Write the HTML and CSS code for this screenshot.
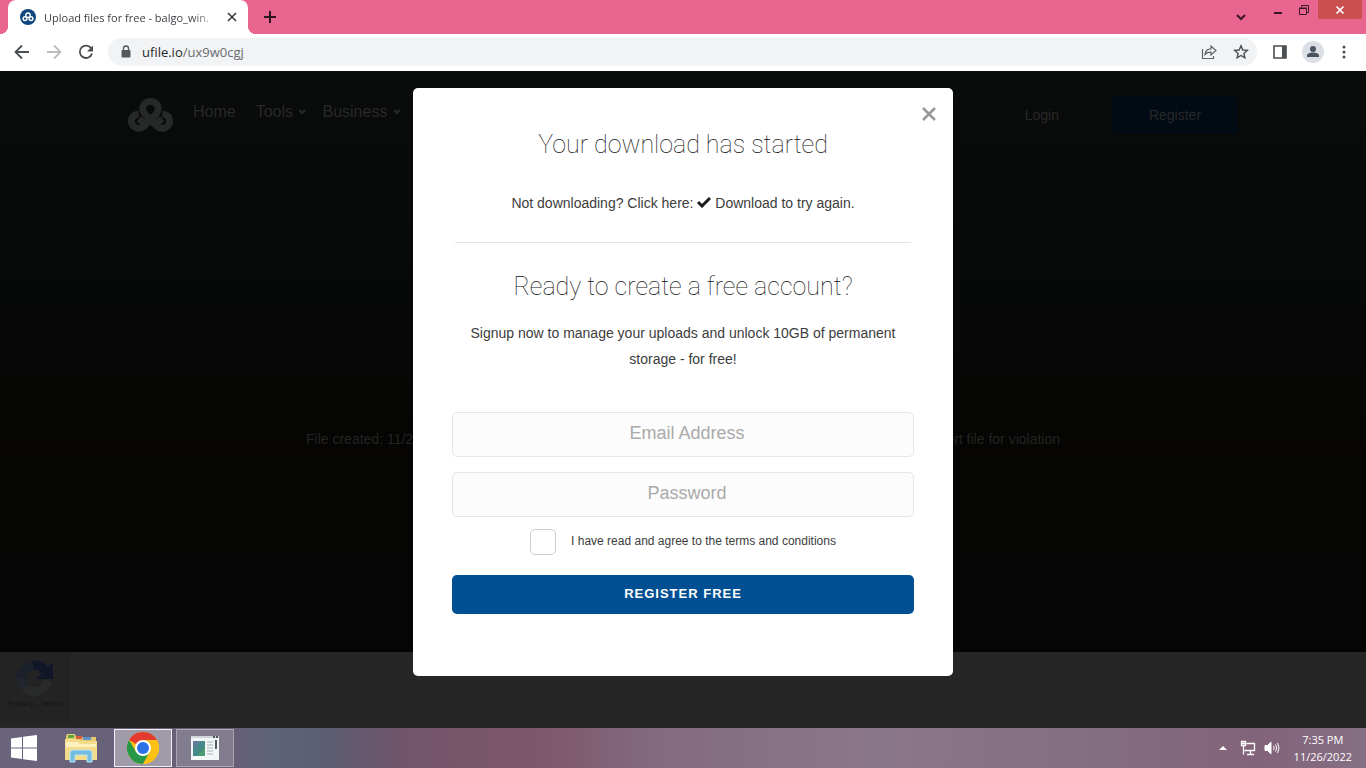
FILE: index.html
```html
<!DOCTYPE html>
<html lang="en">
<head>
    <meta charset="utf-8">
    <title>Upload files for free - balgo_win.</title>
    <link rel="stylesheet" href="styles.css">
</head>
<body>
    <!-- browser tabs -->
    <div class="tabstrip">
        <div class="tab">
            <svg class="favicon" width="16" height="16" viewBox="0 0 16 16">
                <circle cx="8" cy="8" r="8" fill="#11477f"/>
                <g fill="none" stroke="#fff" stroke-width="1.4">
                    <circle cx="8" cy="6.2" r="2.2"/>
                    <circle cx="5" cy="9.6" r="1.9"/>
                    <circle cx="11" cy="9.6" r="1.9"/>
                </g>
            </svg>
            <span class="tab-title">Upload files for free - balgo_win.</span>
            <button class="icon-button" aria-label="Close tab">
                <svg width="10" height="10" viewBox="0 0 10 10" stroke="#333" stroke-width="1.5"><path d="M1 1l8 8M9 1l-8 8"/></svg>
            </button>
        </div>
        <button class="icon-button new-tab" aria-label="New tab">
            <svg width="14" height="14" viewBox="0 0 14 14" stroke="#2c1620" stroke-width="2"><path d="M7 1v12M1 7h12"/></svg>
        </button>
        <div class="window-buttons">
            <button class="icon-button tab-search" aria-label="Search tabs">
                <svg width="12" height="12" viewBox="0 0 12 12" fill="none" stroke="#3c1726" stroke-width="2"><path d="M2 4l4 4 4-4"/></svg>
            </button>
            <button class="icon-button" aria-label="Minimize">
                <svg width="12" height="12" viewBox="0 0 12 12" stroke="#3c1726" stroke-width="2"><path d="M2 9h8"/></svg>
            </button>
            <button class="icon-button" aria-label="Restore">
                <svg width="12" height="12" viewBox="0 0 12 12" fill="none" stroke="#3c1726"><path d="M1.5 4.5h7v6h-7zM1 4h8M3.5 3V1.500h7v7H9"/></svg>
            </button>
            <button class="icon-button window-close" aria-label="Close">
                <svg width="10" height="10" viewBox="0 0 10 10" stroke="#fff" stroke-width="1.700"><path d="M1.500 1.500l7 7M8.500 1.500l-7 7"/></svg>
            </button>
        </div>
    </div>

    <!-- address bar -->
    <div class="toolbar">
        <button class="icon-button" aria-label="Back">
            <svg width="16" height="16" viewBox="0 0 16 16" fill="none" stroke="#4a4d51" stroke-width="1.800"><path d="M15 8H2M8 1.500L1.500 8 8 14.500"/></svg>
        </button>
        <button class="icon-button" aria-label="Forward">
            <svg width="16" height="16" viewBox="0 0 16 16" fill="none" stroke="#bbbdbf" stroke-width="1.800"><path d="M1 8h13M8 1.500L14.500 8 8 14.500"/></svg>
        </button>
        <button class="icon-button" aria-label="Reload">
            <svg width="16" height="16" viewBox="0 0 16 16"><path d="M13.300 4.500A6.200 6.200 0 1 0 14 9.500" fill="none" stroke="#4a4d51" stroke-width="1.800"/><path d="M15 1.500v6H9z" fill="#4a4d51"/></svg>
        </button>
        <div class="address">
            <svg width="10" height="14" viewBox="0 0 10 14"><rect y="5" x=".5" width="9" height="7.500" rx="1" fill="#54575b"/><path d="M2.500 6V3.500a2.500 2.500 0 0 1 5 0V6" fill="none" stroke="#54575b" stroke-width="1.300"/></svg>
            <span class="url">ufile.io<span class="url-path">/ux9w0cgj</span></span>
            <button class="icon-button" aria-label="Share">
                <svg width="16" height="16" viewBox="0 0 16 16" fill="none" stroke="#5f6368" stroke-width="1.200"><path d="M1.500 5v9.500h11V12M4 10.500c.5-4 3-5.700 6-5.700V2l5 4.500L10 11V8.200c-2.500 0-4.300.5-6 2.300z"/></svg>
            </button>
            <button class="icon-button" aria-label="Bookmark">
                <svg width="16" height="16" viewBox="0 0 16 16" fill="none" stroke="#4a4d51" stroke-width="1.400"><path d="M8 1.800l1.800 4.200 4.500.4-3.400 3 1 4.400L8 11.500l-3.900 2.300 1-4.400-3.400-3L6.200 6z"/></svg>
            </button>
        </div>
        <button class="icon-button" aria-label="Side panel">
            <svg width="14" height="14" viewBox="0 0 14 14"><path d="M1 1h12v12H1z" fill="none" stroke="#4a4d51" stroke-width="1.600"/><path d="M9 1h4v12H9z" fill="#4a4d51"/></svg>
        </button>
        <button class="icon-button profile" aria-label="Profile">
            <svg width="22" height="22" viewBox="0 0 22 22"><circle cx="11" cy="11" r="11" fill="#dcdfe6"/><circle cx="11" cy="8" r="3" fill="#4c5360"/><path d="M5 16v-1.500c0-4 12-4 12 0V16z" fill="#4c5360"/></svg>
        </button>
        <button class="icon-button" aria-label="Menu">
            <svg width="4" height="14" viewBox="0 0 4 14" fill="#4a4d51"><circle cx="2" cy="2" r="1.500"/><circle cx="2" cy="7" r="1.500"/><circle cx="2" cy="12" r="1.500"/></svg>
        </button>
    </div>

    <!-- the web page -->
    <div class="page">
        <div class="hero">
            <nav class="nav">
                <a class="logo" href="#" aria-label="Home page">
                    <svg width="45" height="36" viewBox="0 0 46 36" fill="none" stroke="#272828" stroke-width="7" stroke-linejoin="round"><path d="M11 17C2 18 1 28 8 31c5 2 8-1 11-4l10-10c5-8-1-13-6-13s-11 5-6 13l10 10c3 3 6 6 11 4 7-3 6-13-3-14M11 22l5 4M35 22l-5 4"/></svg>
                </a>
                <a href="#">Home</a>
                <a href="#">Tools <svg class="caret" width="8" height="6" viewBox="0 0 8 6"><path d="M1 1l3 3 3-3"/></svg></a>
                <a class="business" href="#">Business <svg class="caret" width="8" height="6" viewBox="0 0 8 6"><path d="M1 1l3 3 3-3"/></svg></a>
                <a class="login" href="#">Login</a>
                <a class="register" href="#">Register</a>
            </nav>
            <div class="file-info">
                <span>File created: 11/26/2022</span>
                <a href="#">Report file for violation</a>
            </div>
        </div>
        <div class="page-bottom">
            <div class="captcha">
                <svg width="40" height="40" viewBox="0 0 40 40" fill="none" stroke-width="9">
                    <path d="M6 20A14 14 0 0 1 20 6" stroke="#1b202b"/>
                    <path d="M18 6a14 14 0 0 1 13 7" stroke="#121629"/>
                    <path d="M38 3v17H21z" fill="#121629"/>
                    <path d="M33 22A14 14 0 0 1 9 28" stroke="#292b2a"/>
                    <path d="M6 19a14 14 0 0 0 4 10" stroke="#20252e"/>
                </svg>
                <span>Privacy - Terms</span>
            </div>
        </div>

        <!-- the download dialog -->
        <div class="overlay">
            <div class="modal" role="dialog" aria-labelledby="modal-title">
                <button class="icon-button modal-close" aria-label="Close dialog">
                    <svg width="16" height="16" viewBox="0 0 16 16" stroke="#999" stroke-width="2.600"><path d="M2 2l12 12M14 2L2 14"/></svg>
                </button>
                <h2 id="modal-title">Your download has started</h2>
                <p class="retry">Not downloading? Click here:
                    <a href="#"><svg width="14" height="11" viewBox="0 0 14 11" fill="none" stroke="#1c1c1c" stroke-width="3"><path d="M1 5l4 4 8-8"/></svg> Download</a> to try again.</p>
                <hr>
                <h2>Ready to create a free account?</h2>
                <p class="signup">Signup now to manage your uploads and unlock 10GB of permanent storage - for free!</p>
                <form>
                    <input class="field" type="email" placeholder="Email Address" aria-label="Email Address">
                    <input class="field" type="password" placeholder="Password" aria-label="Password">
                    <div class="terms">
                        <input type="checkbox" id="agree">
                        <label for="agree">I have read and agree to the terms and conditions</label>
                    </div>
                    <button class="submit" type="button">REGISTER FREE</button>
                </form>
            </div>
        </div>
    </div>

    <!-- taskbar -->
    <div class="taskbar">
        <button class="task start" aria-label="Start">
            <svg width="26" height="26" viewBox="0 0 26 26" fill="#fff"><path d="M0 3.500L11 2v10.500H0zM12 1.800L26 0v12.500H12zM0 13.500h11V24L0 22.500zM12 13.500h14V26l-14-1.800z"/></svg>
        </button>
        <button class="task" aria-label="File Explorer">
            <svg width="32" height="30" viewBox="0 0 32 30">
                <path d="M1 3l1-2h8l1 3h20v23H1z" fill="#e8c96e"/>
                <path d="M3 2h6v3H3z" fill="#5aa845"/><path d="M11 3h6v3h-6z" fill="#d6603e"/><path d="M18 4h8v3h-8z" fill="#5b93c8"/>
                <path d="M0 6h13l2 2h17v19H0z" fill="#f3dd8c"/>
                <path d="M1 9h12l2 2h16v3H1z" fill="#fbf0be"/>
                <path d="M5 29v-9q0-3 3-3h16q3 0 3 3v9h-5v-7H10v7z" fill="#74bde0" stroke="#b9e6f5"/>
            </svg>
        </button>
        <button class="task active" aria-label="Google Chrome">
            <svg width="32" height="32" viewBox="0 0 32 32">
                <circle cx="16" cy="16" r="16" fill="#fbc116"/>
                <path d="M16 16L2.140 8A16 16 0 0 1 29.860 8H16z" fill="#e33b2e"/>
                <path d="M2.140 8A16 16 0 0 0 16 32l6.900-12L16 16 9.100 20z" fill="#279847"/>
                <path d="M16 8h13.860A16 16 0 0 1 16 32l6.900-12z" fill="#fbc116"/>
                <circle cx="16" cy="16" r="8" fill="#fff"/><circle cx="16" cy="16" r="6" fill="#2b72e8"/>
            </svg>
        </button>
        <button class="task running" aria-label="Program">
            <svg width="28" height="24" viewBox="0 0 28 24">
                <path d="M0 0h28v24H0z" fill="#f4f7f7"/>
                <path d="M0 0h28v2H0z" fill="#cfd5d8"/><path d="M22 0h2v2h-2zM25 0h2v2h-2z" fill="#4c545c"/>
                <path d="M2 5h12v15H2z" fill="#438a88"/><path d="M2 5h8L2 14z" fill="#5f7f99"/><path d="M14 11v9H6z" fill="#4b9c72"/>
                <path d="M16 6h6M16 9h6M16 12h6M16 15h6M16 18h6" stroke="#a9b1b5"/>
                <path d="M24 4h2v9h-2z" fill="#4c5c64"/>
            </svg>
        </button>
        <div class="tray">
            <svg width="8" height="4" viewBox="0 0 8 4" fill="#fff"><path d="M0 4l4-4 4 4z"/></svg>
            <svg width="16" height="16" viewBox="0 0 16 16" fill="none" stroke="#fff"><path d="M6.500 3.500h8v7H4.500M10.500 11v3M7 14.500h7M1.500 1.500h4v4h-4zM3.500 5.500v9M2 3.500h3" stroke-width="1.300"/></svg>
            <svg width="16" height="16" viewBox="0 0 16 16" fill="none" stroke="#fff"><path d="M1 5.500h2.500L7 2v12l-3.500-3.500H1z" fill="#fff"/><path d="M9.500 6q1.500 2 0 4M11.500 4.500q2.500 3.500 0 7M13.500 3q3 5 0 10"/></svg>
            <div class="clock">7:35 PM<br>11/26/2022</div>
        </div>
    </div>
</body>
</html>
```

FILE: styles.css
```css
* {
    box-sizing: border-box;
}

body {
    display: flex;
    flex-direction: column;
    min-height: 100vh;
    margin: 0;
    font-family: "Liberation Sans", Arial, sans-serif;
    font-size: 14px;
}

h2, p {
    margin: 0;
}

a {
    color: inherit;
    text-decoration: none;
}

svg {
    flex: none;
}

.icon-button {
    display: flex;
    align-items: center;
    justify-content: center;
    flex: none;
    padding: 0;
    border: 0;
    background: none;
}

/* Browser tabs */
.tabstrip {
    display: flex;
    align-items: stretch;
    height: 34px;
    padding-left: 8px;
    background: #e8658f;
}

.tab {
    position: relative;
    display: flex;
    align-items: center;
    gap: 8px;
    width: 240px;
    padding: 0 11px 0 12px;
    border-radius: 8px 8px 0 0;
    background: #fff;
}

/* The flared feet of the open tab */
.tab::before, .tab::after {
    content: "";
    position: absolute;
    bottom: 0;
    width: 8px;
    height: 8px;
}

.tab::before {
    left: -8px;
    background: radial-gradient(circle at 0 0, transparent 8px, #fff 8px);
}

.tab::after {
    right: -8px;
    background: radial-gradient(circle at 100% 0, transparent 8px, #fff 8px);
}

.tab-title {
    flex: 1;
    white-space: nowrap;
    font-family: "Open Sans", sans-serif;
    font-size: 11px;
    color: #3c3f43;
    -webkit-mask-image: linear-gradient(to right, #000 85%, transparent);
    mask-image: linear-gradient(to right, #000 85%, transparent);
}

.new-tab {
    width: 44px;
}

.window-buttons {
    display: flex;
    align-items: flex-start;
    margin-left: auto;
    padding-right: 4px;
}

.window-buttons .icon-button {
    width: 26px;
    height: 19px;
}

.window-buttons .tab-search {
    width: 48px;
    height: 33px;
}

.window-buttons .window-close {
    width: 44px;
    margin-left: 1px;
    background: #c9504e;
}

/* Address bar */
.toolbar {
    display: flex;
    align-items: center;
    gap: 16px;
    height: 37px;
    padding: 0 20px 2px 14px;
    background: #fff;
}

.address {
    display: flex;
    flex: 1;
    align-items: center;
    gap: 16px;
    height: 28px;
    margin-left: -2px;
    padding: 0 8px 0 13px;
    border-radius: 14px;
    background: #f1f3f4;
}

.url {
    flex: 1;
    margin-left: -5px;
    font-family: "Open Sans", sans-serif;
    font-size: 13px;
    color: #26282b;
}

.url-path {
    color: #686c71;
}

.profile {
    margin: 0 2px 0 -1px;
}

/* The page under the overlay */
.page {
    position: relative;
    display: flex;
    flex: 1;
    flex-direction: column;
    background: #262626;
}

.hero {
    flex: 1;
    padding: 25px 20px 0;
    background: linear-gradient(#0a0b0b, #070808 40%, #060503 65%, #040505);
    color: #282929;
}

.nav {
    display: flex;
    align-items: center;
    gap: 20px;
    max-width: 1110px;
    margin: 0 auto;
    font-size: 16px;
}

.nav a {
    margin-bottom: 6px;
}

.nav .logo {
    height: 36px;
    margin-bottom: 0;
}

.nav .business {
    margin-left: -4px;
}

.caret {
    margin: 0 0 2px 1px;
    fill: none;
    stroke: #282929;
    stroke-width: 2;
}

.nav .login {
    margin: 0 33px 0 auto;
    font-size: 14px;
}

.nav .register {
    width: 126px;
    margin: 0;
    border-radius: 4px;
    background: #020a13;
    font-size: 14px;
    line-height: 38px;
    text-align: center;
}

.file-info {
    display: flex;
    justify-content: space-between;
    max-width: 754px;
    margin: 297px auto 0;
    color: #232322;
}

.page-bottom {
    height: 76px;
}

.captcha {
    display: flex;
    flex-direction: column;
    align-items: center;
    width: 70px;
    height: 72px;
    padding-top: 7px;
    background: #232323;
    color: #141414;
    font-size: 8px;
}

/* Download dialog */
.overlay {
    position: absolute;
    inset: 0;
    padding-top: 17px;
}

.modal {
    position: relative;
    max-width: 540px;
    margin: 0 auto;
    padding: 42px 39px 62px;
    border-radius: 5px;
    background: #fff;
    color: #3c3c3c;
    text-align: center;
}

.modal-close {
    position: absolute;
    top: 18px;
    right: 16px;
}

.modal h2 {
    font-family: Roboto, sans-serif;
    font-size: 25px;
    font-weight: 100;
    line-height: 30px;
    color: #111;
}

.modal p {
    line-height: 26px;
}

.retry {
    padding: 30px 0 26px;
}

.modal hr {
    height: 1px;
    margin: 0 3px 29px;
    border: 0;
    background: #e4e4e6;
}

.signup {
    padding: 18px 0 40px;
}

.field {
    display: block;
    width: 100%;
    height: 45px;
    margin-bottom: 15px;
    padding: 0 4px 2px 12px;
    border: 1px solid #e6e6e6;
    border-radius: 5px;
    background: #fcfcfc;
    font-family: inherit;
    font-size: 18px;
    text-align: center;
}

.field::placeholder {
    color: #aaa;
}

.terms {
    display: flex;
    align-items: center;
    justify-content: center;
    gap: 15px;
    margin: -3px 0 20px;
    font-size: 12px;
}

.terms input {
    width: 26px;
    height: 26px;
    margin: 0;
    border: 1px solid #ccc;
    border-radius: 5px;
    background: #fff;
    appearance: none;
}

.terms label {
    padding-bottom: 2px;
}

.submit {
    width: 100%;
    height: 39px;
    padding: 0 0 2px;
    border: 0;
    border-radius: 5px;
    background: #004f92;
    color: #fff;
    font-family: inherit;
    font-size: 13px;
    font-weight: bold;
    letter-spacing: 1px;
}

/* Taskbar */
.taskbar {
    display: flex;
    align-items: center;
    gap: 4px;
    height: 40px;
    background: linear-gradient(to right, #6a637c 0, #665f77 17%, #5d6378 20%, #5c5d73 24%, #735469 30%, #7e586b 40%, #846a7f 48%, #8a7788 64%, #846d80 80%, #836379 92%, #866f84);
}

.task {
    display: flex;
    align-items: center;
    justify-content: center;
    width: 58px;
    height: 38px;
    padding: 0;
    border: 0;
    background: none;
}

.start {
    width: 48px;
}

.active {
    border: 1px solid #f2f0f4;
    background: #a09ba8;
}

.running {
    border: 1px solid #aaa5b2;
    background: #817c8e;
}

.tray {
    display: flex;
    align-items: center;
    gap: 8px;
    margin-left: auto;
    padding-right: 14px;
}

.tray svg:first-child {
    margin-right: 5px;
}

.clock {
    margin-left: 6px;
    color: #fff;
    font-family: "Open Sans", sans-serif;
    font-size: 11px;
    line-height: 17px;
    text-align: center;
}
```
